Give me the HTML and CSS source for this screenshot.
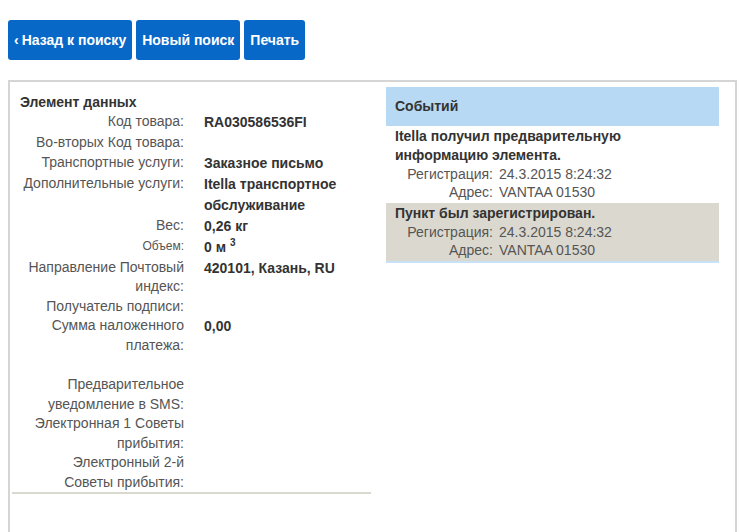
FILE: index.html
```html
<!DOCTYPE html>
<html lang="ru">
<head>
  <meta charset="UTF-8">
  <title>Отслеживание отправления</title>
  <link rel="stylesheet" href="styles.css">
</head>
<body>
  <div class="toolbar">
    <a class="btn" href="#"><span class="chevron">&lsaquo;</span>Назад к поиску</a>
    <a class="btn" href="#">Новый поиск</a>
    <a class="btn" href="#">Печать</a>
  </div>

  <div class="result">
    <div class="details">
      <div class="details-title">Элемент данных</div>
      <div class="row"><div class="label">Код товара:</div><div class="value">RA030586536FI</div></div>
      <div class="row"><div class="label">Во-вторых Код товара:</div><div class="value"></div></div>
      <div class="row"><div class="label">Транспортные услуги:</div><div class="value">Заказное письмо</div></div>
      <div class="row"><div class="label">Дополнительные услуги:</div><div class="value">Itella транспортное обслуживание</div></div>
      <div class="row"><div class="label">Вес:</div><div class="value">0,26 кг</div></div>
      <div class="row"><div class="label small">Объем:</div><div class="value">0 м <sup>3</sup></div></div>
      <div class="row"><div class="label">Направление Почтовый индекс:</div><div class="value">420101, Казань, RU</div></div>
      <div class="row"><div class="label">Получатель подписи:</div><div class="value"></div></div>
      <div class="row"><div class="label">Сумма наложенного платежа:</div><div class="value">0,00</div></div>
      <div class="row empty"><div class="label"></div><div class="value"></div></div>
      <div class="row"><div class="label">Предварительное уведомление в SMS:</div><div class="value"></div></div>
      <div class="row"><div class="label">Электронная 1 Советы прибытия:</div><div class="value"></div></div>
      <div class="row"><div class="label">Электронный 2-й<br>Советы прибытия:</div><div class="value"></div></div>
    </div>

    <div class="events">
      <div class="events-head">Событий</div>
      <div class="event">
        <div class="event-body">
          <div class="event-title">Itella получил предварительную информацию элемента.</div>
          <div class="event-label">Регистрация:</div><div class="event-value">24.3.2015 8:24:32</div>
          <div class="event-label">Адрес:</div><div class="event-value">VANTAA 01530</div>
        </div>
      </div>
      <div class="event odd">
        <div class="event-body">
          <div class="event-title">Пункт был зарегистрирован.</div>
          <div class="event-label">Регистрация:</div><div class="event-value">24.3.2015 8:24:32</div>
          <div class="event-label">Адрес:</div><div class="event-value">VANTAA 01530</div>
        </div>
      </div>
    </div>
  </div>
</body>
</html>
```

FILE: styles.css
```css
body {
    margin: 0;
    font-family: "Liberation Sans", Arial, sans-serif;
    font-size: 14px;
    color: #555;
    background: #fff;
}

.toolbar {
    display: flex;
    gap: 4px;
    padding: 20px 8px 0 8px;
}

.btn {
    display: block;
    height: 40px;
    line-height: 40px;
    padding: 0 6px;
    background-color: #0868c8;
    color: #fff;
    border-radius: 3px;
    text-decoration: none;
    font-weight: bold;
    font-size: 14px;
}

.chevron {
    font-size: 14px;
    margin-right: 3px;
}

.result {
    margin: 20px 19px 0 8px;
    border: 2px solid #d5d5d5;
    border-bottom: none;
    height: 460px;
    display: grid;
    grid-template-columns: 359px 333px;
    column-gap: 15px;
    align-items: start;
    padding: 5px 0 0 2px;
}

/* left column: item data */
.details {
    border-bottom: 2px solid #d9d9cf;
}

.details-title {
    font-weight: bold;
    color: #333;
    padding: 5px 0 0 8px;
    line-height: 20px;
}

.row {
    display: grid;
    grid-template-columns: 172px 1fr;
    column-gap: 20px;
    min-height: 19.5px;
}

.row.empty {
    height: 20px;
}

.label {
    text-align: right;
    line-height: 19.5px;
}

.label.small {
    font-size: 12px;
}

.value {
    font-weight: bold;
    color: #333;
    line-height: 21px;
}

.value sup {
    font-size: 10px;
    line-height: 0;
}

/* right column: events */
.events-head {
    background-color: #b7d9f3;
    height: 39px;
    line-height: 39px;
    padding-left: 9px;
    font-weight: bold;
    color: #333;
}

.event {
    padding: 1px 9px 1px 9px;
    line-height: 18px;
    border-bottom: 1px solid #fff;
}

.event.odd {
    background-color: #dbd9cf;
    padding-bottom: 2px;
    border-bottom: 2px solid #c9e1f4;
}

.event-body {
    display: inline-grid;
    grid-template-columns: 98px minmax(125px, auto);
    column-gap: 6px;
}

.event-title {
    grid-column: 1 / -1;
    contain: inline-size;
    font-weight: bold;
    color: #333;
    line-height: 19px;
}

.event-label {
    text-align: right;
}
```
